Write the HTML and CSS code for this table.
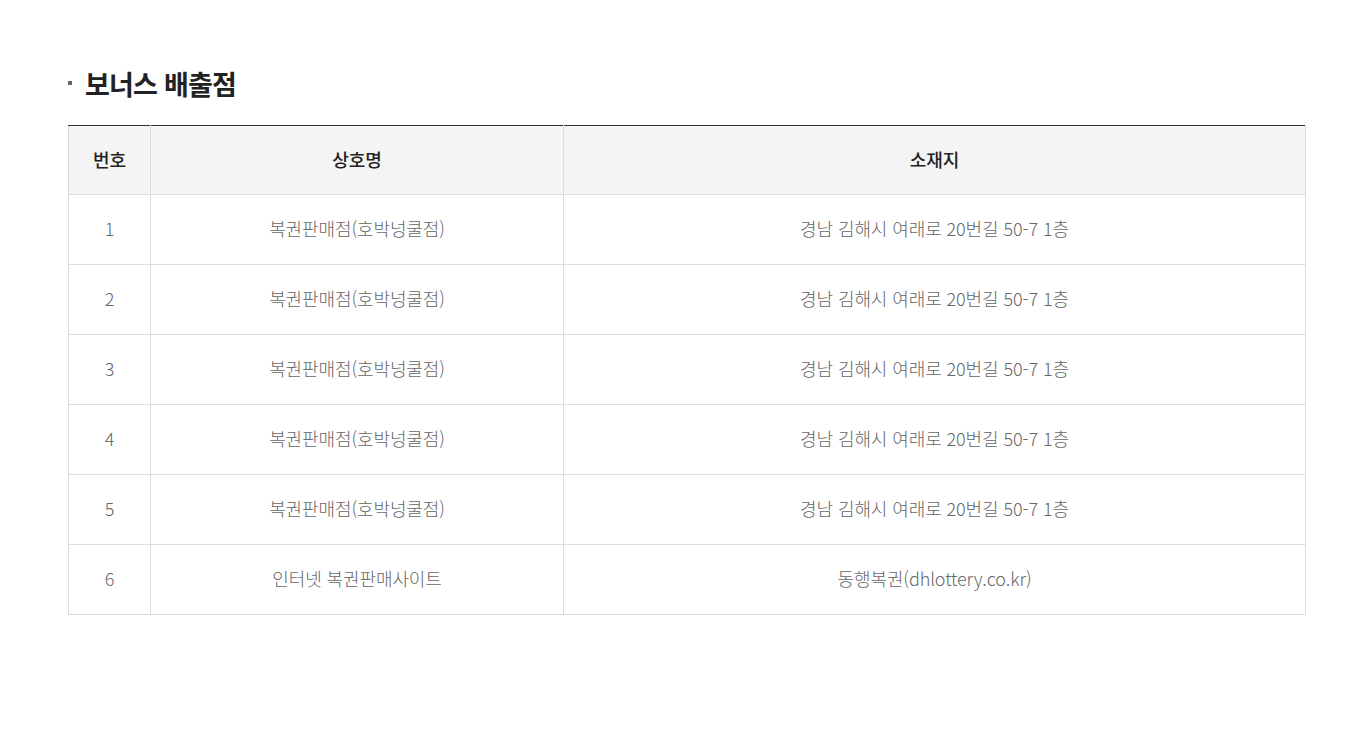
FILE: index.html
```html
<!DOCTYPE html>
<html lang="ko">
<head>
<meta charset="utf-8">
<link rel="stylesheet" href="styles.css">
</head>
<body>
<div class="wrap">
  <h3 class="title"><span class="dot"></span>보너스 배출점</h3>
  <table class="tbl">
    <colgroup>
      <col class="c1"><col class="c2"><col class="c3">
    </colgroup>
    <thead>
      <tr><th>번호</th><th>상호명</th><th>소재지</th></tr>
    </thead>
    <tbody>
      <tr><td>1</td><td>복권판매점(호박넝쿨점)</td><td>경남 김해시 여래로 20번길 50-7 1층</td></tr>
      <tr><td>2</td><td>복권판매점(호박넝쿨점)</td><td>경남 김해시 여래로 20번길 50-7 1층</td></tr>
      <tr><td>3</td><td>복권판매점(호박넝쿨점)</td><td>경남 김해시 여래로 20번길 50-7 1층</td></tr>
      <tr><td>4</td><td>복권판매점(호박넝쿨점)</td><td>경남 김해시 여래로 20번길 50-7 1층</td></tr>
      <tr><td>5</td><td>복권판매점(호박넝쿨점)</td><td>경남 김해시 여래로 20번길 50-7 1층</td></tr>
      <tr><td>6</td><td>인터넷 복권판매사이트</td><td>동행복권(dhlottery.co.kr)</td></tr>
    </tbody>
  </table>
</div>
</body>
</html>
```
FILE: styles.css
```css
html, body {
  margin: 0;
  padding: 0;
  background: #fff;
}
body {
  font-family: "Noto Sans CJK KR", "Noto Sans", sans-serif;
  color: #666;
}
.wrap {
  padding: 66px 65px 0 68px;
}
.title {
  display: flex;
  align-items: center;
  margin: 0 0 23px 0;
  font-size: 27px;
  font-weight: 700;
  color: #222;
  letter-spacing: -0.8px;
  line-height: 36px;
}
.dot {
  width: 4px;
  height: 4px;
  background: #666;
  margin-right: 13px;
  margin-top: -2px;
}
.tbl {
  width: 1237px;
  border-collapse: collapse;
  table-layout: fixed;
  font-size: 18px;
  letter-spacing: -0.1px;
}
.c1 { width: 82px; }
.c2 { width: 413px; }
.c3 { width: 742px; }
.tbl th, .tbl td {
  border: 1px solid #ddd;
  text-align: center;
  padding: 0 0 3px 0;
}
.tbl thead tr:first-child th {
  border-top: 1px solid #333;
}
.tbl th {
  height: 65px;
  background: #f4f4f4;
  color: #222;
  font-weight: 500;
}
.tbl td {
  height: 66px;
  color: #666;
  font-weight: 300;
}
```
